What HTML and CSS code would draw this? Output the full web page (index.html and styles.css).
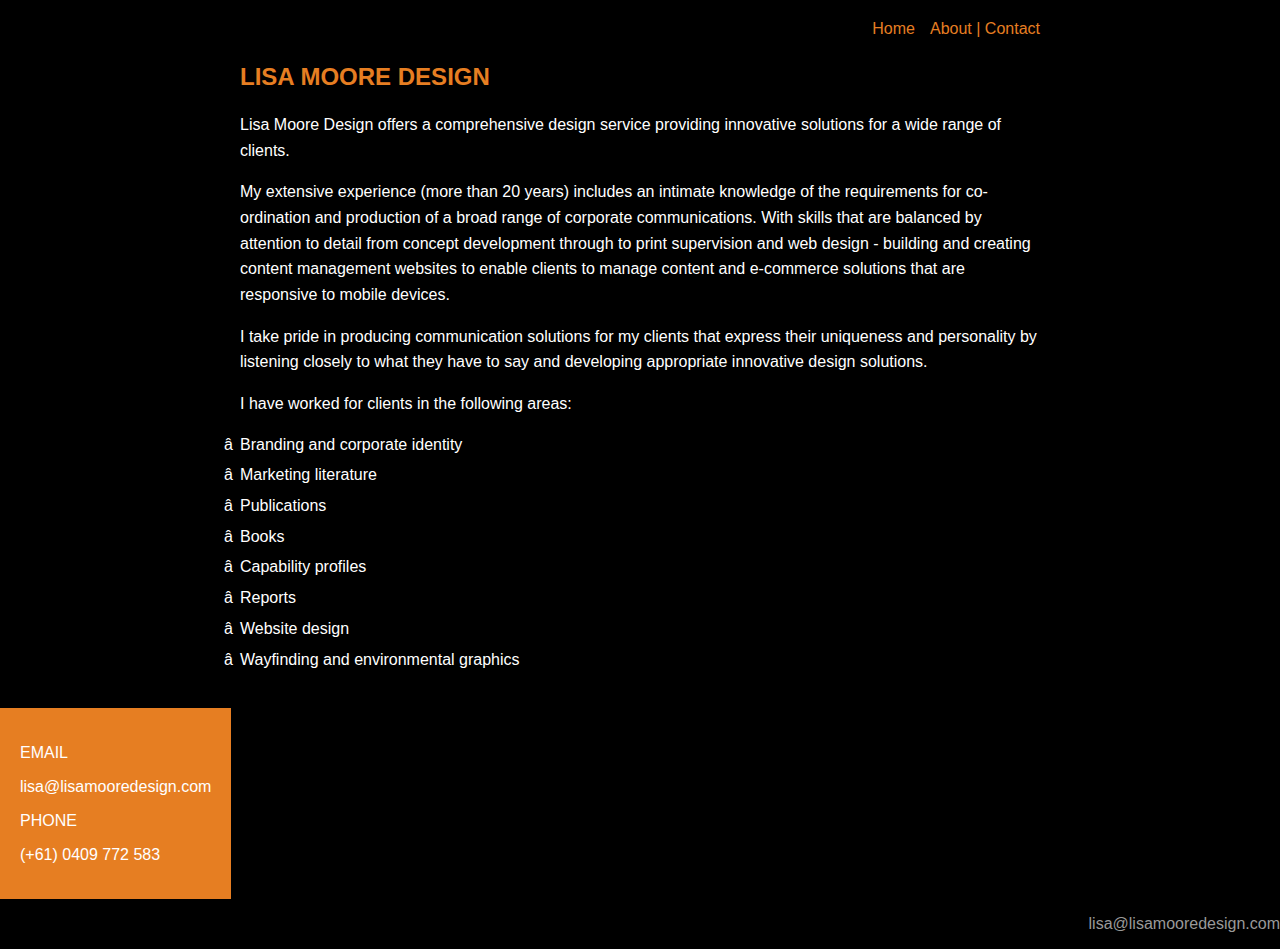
FILE: index.html
```html
<!DOCTYPE html>
<html lang="en">
<head>
<meta charset="utf-8">
<title>Lisa Moore Design</title>
<link rel="stylesheet" href="styles.css">
</head>
<body>
<div class="wrap">
  <nav class="nav"><a href="#">Home</a><a href="#" class="gap">About</a> | <a href="#">Contact</a></nav>
  <h1 class="title">LISA MOORE DESIGN</h1>
  <p>Lisa Moore Design offers a comprehensive design service providing innovative solutions for a wide range of clients.</p>
  <p>My extensive experience (more than 20 years) includes an intimate knowledge of the requirements for co-ordination and production of a broad range of corporate communications. With skills that are balanced by attention to detail from concept development through to print supervision and web design - building and creating content management websites to enable clients to manage content and e-commerce solutions that are responsive to mobile devices.</p>
  <p>I take pride in producing communication solutions for my clients that express their uniqueness and personality by listening closely to what they have to say and developing appropriate innovative design solutions.</p>
  <p>I have worked for clients in the following areas:</p>
  <ul class="areas">
    <li>Branding and corporate identity</li>
    <li>Marketing literature</li>
    <li>Publications</li>
    <li>Books</li>
    <li>Capability profiles</li>
    <li>Reports</li>
    <li>Website design</li>
    <li>Wayfinding and environmental graphics</li>
  </ul>
</div>
<div class="contact">
  <p>EMAIL</p>
  <p>lisa@lisamooredesign.com</p>
  <p>PHONE</p>
  <p>(+61) 0409 772 583</p>
</div>
<footer class="footer">lisa@lisamooredesign.com</footer>
</body>
</html>
```
FILE: styles.css
```css
html, body {
  margin: 0;
  padding: 0;
  background: #000;
}
body {
  font-family: "Liberation Sans", Arial, sans-serif;
  font-size: 16px;
  color: #fff;
}
.wrap {
  width: 800px;
  margin: 0 auto;
}
.nav {
  padding-top: 19px;
  line-height: 19px;
  text-align: right;
  color: #e67e22;
}
.nav a {
  color: #e67e22;
  text-decoration: none;
}
.nav .gap {
  margin-left: 15px;
}
.title {
  margin: 25px 0 21px;
  font-size: 24px;
  line-height: 28px;
  font-weight: bold;
  color: #e67e22;
}
.wrap p {
  margin: 0 0 16.2px;
  line-height: 25.6px;
}
.areas {
  list-style: none;
  margin: -1px 0 0;
  padding: 0;
  display: flex;
  flex-direction: column;
  gap: 5.1px;
}
.areas li {
  line-height: 25.6px;
}
.areas li::before {
  content: "â";
  display: inline-block;
  width: 16px;
  margin-left: -16px;
}
.contact {
  width: fit-content;
  margin-top: 36px;
  padding: 20px 20px 19px;
  background: #e67e22;
  font-size: 16px;
}
.contact p {
  margin: 16px 0;
  line-height: 18px;
}
.footer {
  margin-top: 16px;
  text-align: right;
  font-size: 16px;
  line-height: 18px;
  color: #999;
}
```
